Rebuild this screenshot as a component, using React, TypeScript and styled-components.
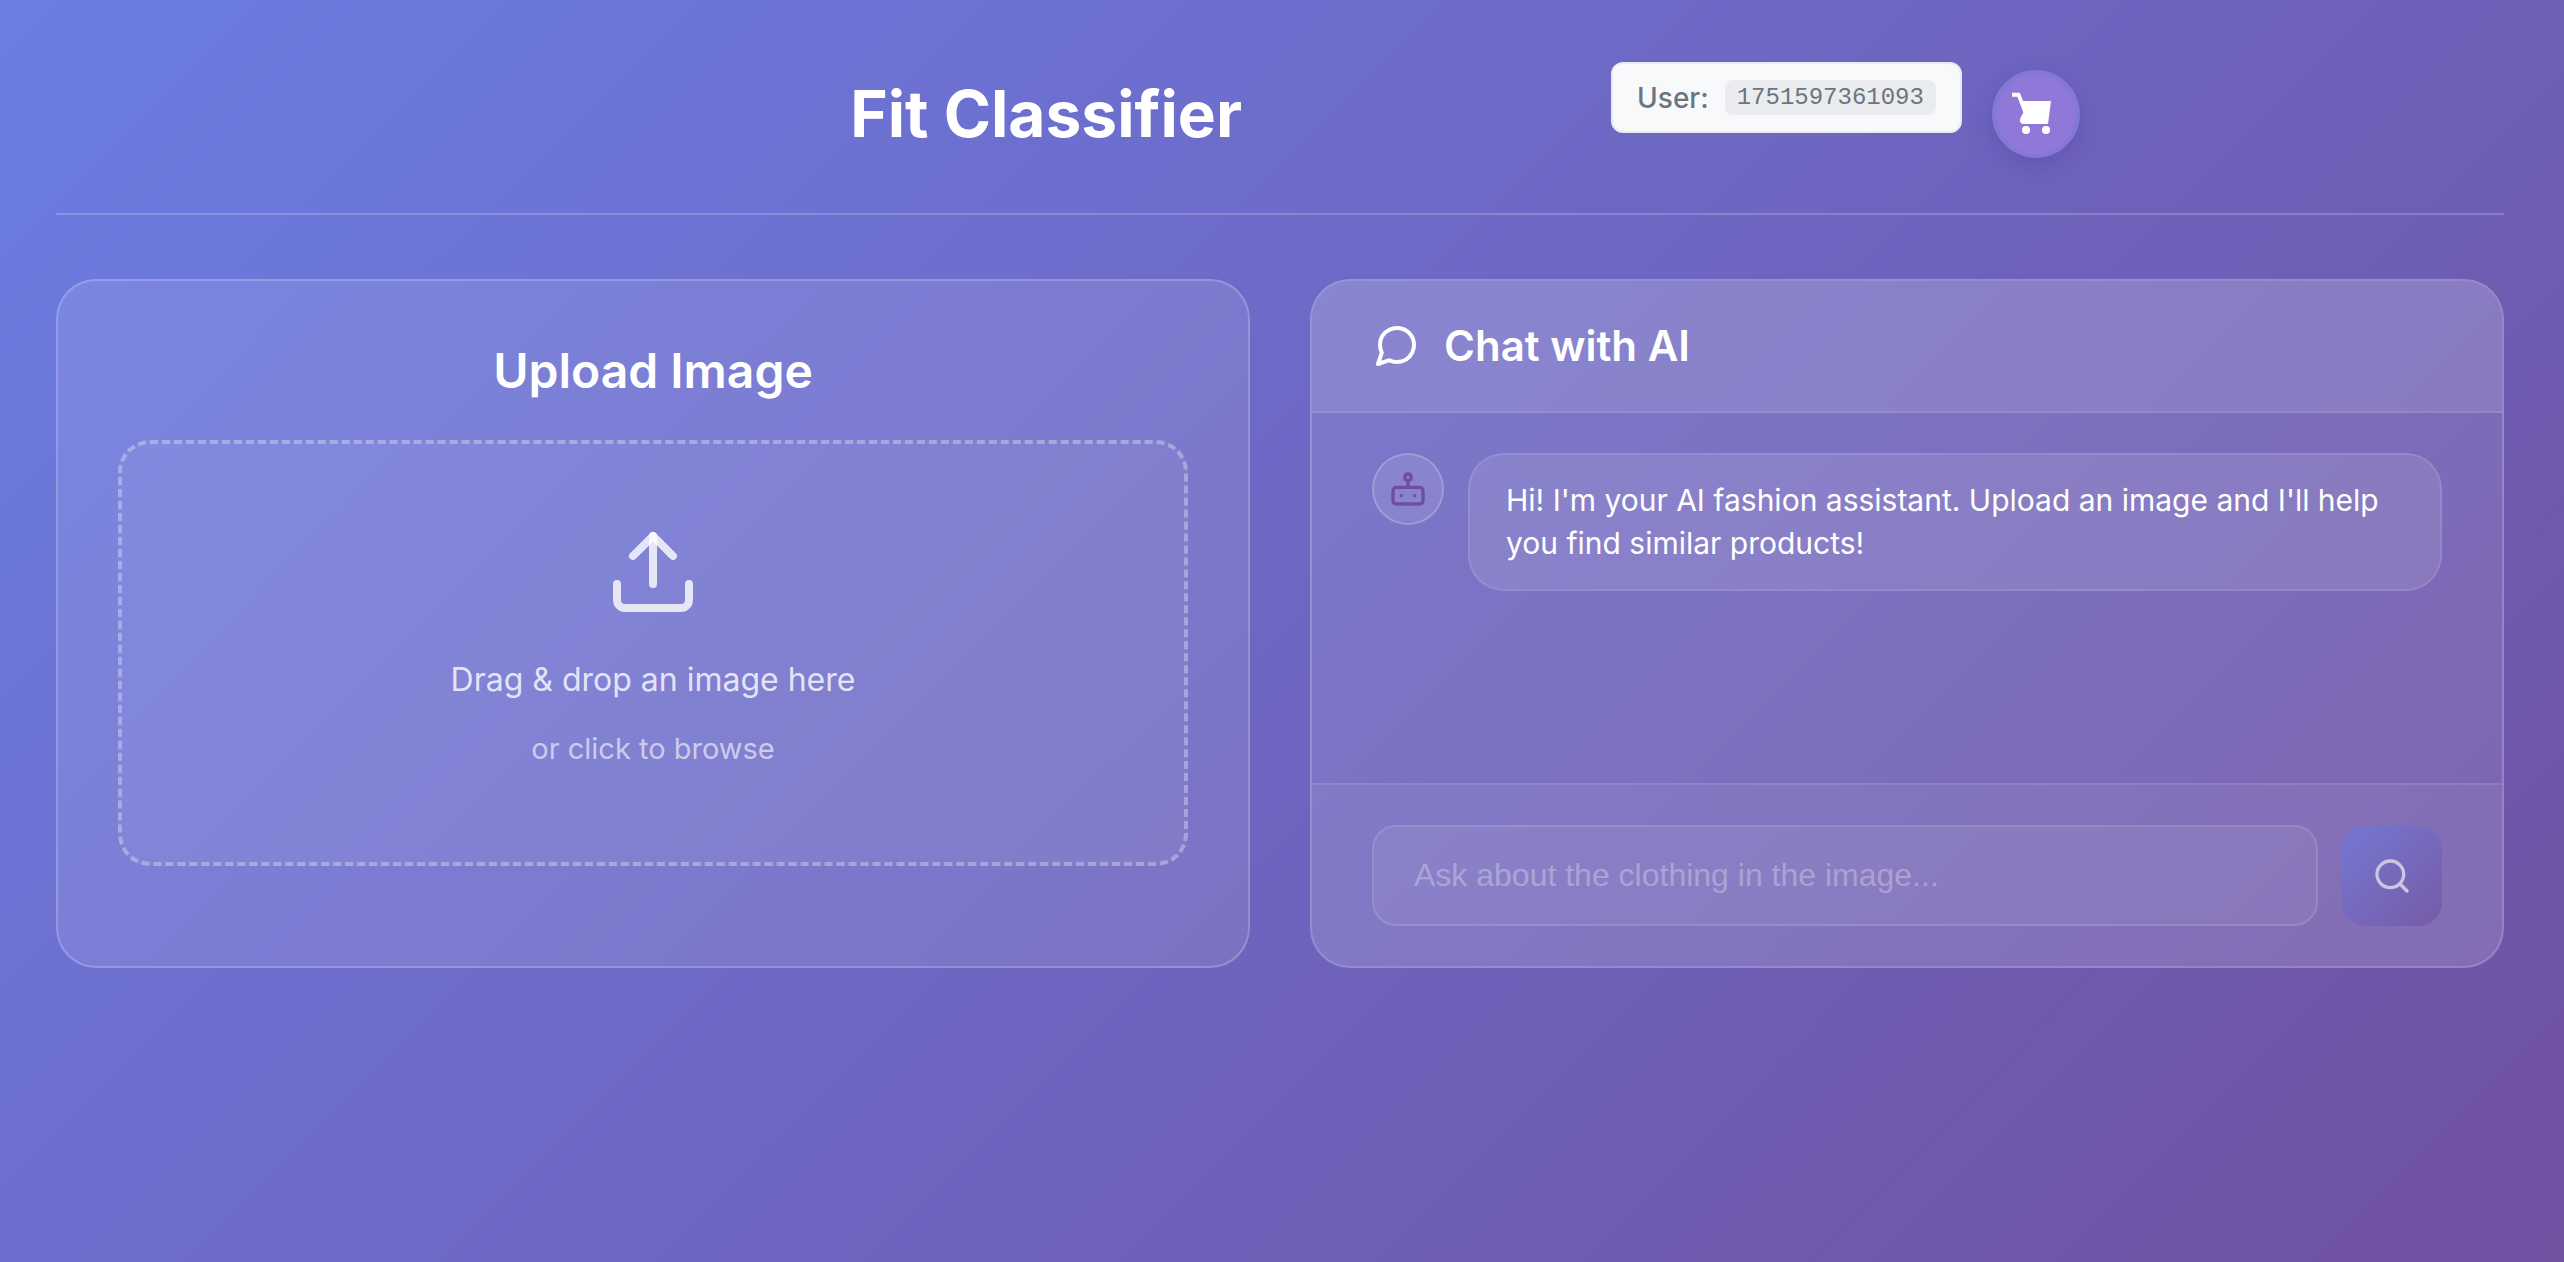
import React, { useState } from "react";
import styled, { createGlobalStyle } from "styled-components";

const sans = `Inter, "Liberation Sans", sans-serif`;
const brandGradient = "linear-gradient(135deg, #6b7de3 0%, #7050a1 100%)";

const GlobalStyle = createGlobalStyle`
  *, *::before, *::after { box-sizing: border-box; }
  body { margin: 0; font-family: ${sans}; }
  h1, h2, p { margin: 0; }
`;

const Page = styled.div`
  min-height: 100vh;
  padding: 40px 60px 60px 56px;
  background: ${brandGradient};
  color: #fff;
`;

const Header = styled.header`
  display: grid;
  grid-template-columns: 794fr auto 369fr auto 424fr;
  align-items: start;
  margin-bottom: 64px;
  padding: 22px 0 47px;
  border-bottom: 2px solid rgba(255, 255, 255, 0.2);
`;

const Title = styled.h1`
  grid-column: 2;
  font-size: 64px;
  line-height: 104px;
  font-weight: 700;
`;

const Account = styled.div`
  grid-column: 4;
  display: flex;
  align-items: flex-start;
  gap: 30px;
`;

const UserBadge = styled.div`
  display: flex;
  align-items: center;
  gap: 16px;
  height: 71px;
  padding: 0 24px;
  border: 2px solid #e9ecef;
  border-radius: 12px;
  background: #f8f9fa;
  color: #6c757d;
  font-size: 28px;
  font-weight: 500;
  font-variation-settings: "opsz" 14;
`;

const UserId = styled.code`
  padding: 0 12px;
  border-radius: 8px;
  background: #ebecef;
  color: #6c757d;
  font-family: "Liberation Mono", monospace;
  font-size: 24px;
  line-height: 35px;
  font-weight: 400;
`;

const CartButton = styled.button`
  display: grid;
  place-items: center;
  width: 88px;
  height: 88px;
  margin-top: 8px;
  padding: 0;
  border: 4px solid #8279d6;
  border-radius: 50%;
  background: #8f78d8;
  color: #fff;
  box-shadow: 0 8px 24px rgba(60, 30, 120, 0.2);
  cursor: pointer;
`;

const Columns = styled.main`
  display: grid;
  grid-template-columns: 1fr 1fr;
  gap: 60px;
`;

const Card = styled.section`
  display: flex;
  flex-direction: column;
  overflow: hidden;
  border: 2px solid rgba(255, 255, 255, 0.2);
  border-radius: 40px;
  background: rgba(255, 255, 255, 0.1);
`;

const UploadCard = styled(Card)`
  padding: 60px 60px 100px;
`;

const UploadTitle = styled.h2`
  margin-bottom: 40px;
  font-size: 48px;
  line-height: 59px;
  font-weight: 600;
  font-variation-settings: "opsz" 24;
  text-align: center;
`;

const DropZone = styled.label`
  display: flex;
  flex-direction: column;
  align-items: center;
  padding: 80px;
  border: 4px dashed rgba(255, 255, 255, 0.3);
  border-radius: 32px;
  background: rgba(255, 255, 255, 0.05);
  font-variation-settings: "opsz" 14;
  cursor: pointer;

  input { display: none; }
`;

const DropText = styled.p`
  margin-top: 32px;
  color: rgba(255, 255, 255, 0.8);
  font-size: 32px;
  line-height: 56px;
`;

const DropHint = styled.p`
  margin: 16px 0 8px;
  color: rgba(255, 255, 255, 0.6);
  font-size: 29px;
  line-height: 50px;
`;

const ChatHeader = styled.header`
  display: flex;
  align-items: center;
  gap: 24px;
  padding: 40px 60px;
  border-bottom: 2px solid rgba(255, 255, 255, 0.1);
  background: rgba(255, 255, 255, 0.1);
`;

const ChatTitle = styled.h2`
  font-size: 42px;
  line-height: 50px;
  font-weight: 600;
  font-variation-settings: "opsz" 24;
`;

const Messages = styled.div`
  flex: 1;
  padding: 40px 60px;
`;

const Message = styled.div`
  display: flex;
  align-items: flex-start;
  gap: 24px;
`;

const Avatar = styled.div`
  display: grid;
  flex: none;
  place-items: center;
  width: 72px;
  height: 72px;
  border: 2px solid rgba(255, 255, 255, 0.2);
  border-radius: 50%;
  background: rgba(255, 255, 255, 0.1);
  color: #704d9d;
`;

const Bubble = styled.p`
  flex: 1;
  padding: 24px 36px;
  border: 2px solid rgba(255, 255, 255, 0.1);
  border-radius: 36px;
  background: rgba(255, 255, 255, 0.1);
  font-size: 30px;
  line-height: 43px;
  font-variation-settings: "opsz" 14;
`;

const Composer = styled.form`
  display: flex;
  gap: 24px;
  padding: 40px 60px;
  border-top: 2px solid rgba(255, 255, 255, 0.1);
  background: rgba(255, 255, 255, 0.05);
`;

const Question = styled.input`
  flex: 1;
  min-width: 0;
  height: 101px;
  padding: 0 40px;
  border: 2px solid rgba(255, 255, 255, 0.2);
  border-radius: 24px;
  background: rgba(255, 255, 255, 0.1);
  color: #fff;
  font-family: "Liberation Sans", Arial, sans-serif;
  font-size: 32px;
  opacity: 0.6;

  &::placeholder { color: rgba(255, 255, 255, 0.5); opacity: 1; }
`;

const SearchButton = styled.button`
  display: grid;
  place-items: center;
  align-self: flex-end;
  width: 100px;
  height: 100px;
  padding: 0;
  border: 0;
  border-radius: 24px;
  background: ${brandGradient};
  color: #fff;
  opacity: 0.6;
`;

const LineIcon = ({ size, children }: { size: number; children: React.ReactNode }) => (
  <svg width={size} height={size} viewBox="0 0 24 24" fill="none" stroke="currentColor"
    strokeWidth="2" strokeLinecap="round" strokeLinejoin="round" aria-hidden="true">
    {children}
  </svg>
);

const UploadIcon = () => (
  <svg width="96" height="96" viewBox="0 0 24 24" fill="none" stroke="rgba(255,255,255,0.8)"
    strokeWidth="2" strokeLinecap="round" strokeLinejoin="round" aria-hidden="true">
    <path d="M21 15v4a2 2 0 0 1-2 2H5a2 2 0 0 1-2-2v-4" />
    <polyline points="17 8 12 3 7 8" />
    <line x1="12" y1="3" x2="12" y2="15" />
  </svg>
);

const CartIcon = () => (
  <svg width="48" height="48" viewBox="0 0 24 24" fill="currentColor" aria-hidden="true">
    <path d="M0 1.4h3.9l1.7 4.1h13.9L18 17H5.7c-1 0-1.7-.7-1.7-1.7 0-.7.2-1.3.5-1.9l1.2-2.1-3-7.9H0z" />
    <circle cx="7" cy="20" r="2" />
    <circle cx="17" cy="20" r="2" />
  </svg>
);

export default function App() {
  const [question, setQuestion] = useState("");

  return (
    <>
      <GlobalStyle />
      <Page>
        <Header>
          <Title>Fit Classifier</Title>
          <Account>
            <UserBadge>
              <span>User:</span>
              <UserId>1751597361093</UserId>
            </UserBadge>
            <CartButton type="button" aria-label="Cart"><CartIcon /></CartButton>
          </Account>
        </Header>
        <Columns>
          <UploadCard>
            <UploadTitle>Upload Image</UploadTitle>
            <DropZone>
              <input type="file" accept="image/*" />
              <UploadIcon />
              <DropText>Drag &amp; drop an image here</DropText>
              <DropHint>or click to browse</DropHint>
            </DropZone>
          </UploadCard>
          <Card>
            <ChatHeader>
              <LineIcon size={48}>
                <path d="M21 11.5a8.38 8.38 0 0 1-.9 3.8 8.5 8.5 0 0 1-7.6 4.7 8.38 8.38 0 0 1-3.8-.9L3 21l1.9-5.7a8.38 8.38 0 0 1-.9-3.8 8.5 8.5 0 0 1 4.7-7.6 8.38 8.38 0 0 1 3.8-.9h.5a8.48 8.48 0 0 1 8 8v.5z" />
              </LineIcon>
              <ChatTitle>Chat with AI</ChatTitle>
            </ChatHeader>
            <Messages>
              <Message>
                <Avatar>
                  <LineIcon size={40}>
                    <rect x="3" y="11" width="18" height="10" rx="2" />
                    <circle cx="12" cy="5" r="2" />
                    <path d="M12 7v4" />
                    <path d="M8 16h.01M16 16h.01" />
                  </LineIcon>
                </Avatar>
                <Bubble>
                  Hi! I'm your AI fashion assistant. Upload an image and I'll help you find similar products!
                </Bubble>
              </Message>
            </Messages>
            <Composer onSubmit={(e) => e.preventDefault()}>
              <Question
                aria-label="Question"
                placeholder="Ask about the clothing in the image..."
                value={question}
                onChange={(e) => setQuestion(e.target.value)}
                disabled
              />
              <SearchButton type="submit" aria-label="Search" disabled>
                <LineIcon size={40}>
                  <circle cx="11" cy="11" r="8" />
                  <path d="m21 21-4.35-4.35" />
                </LineIcon>
              </SearchButton>
            </Composer>
          </Card>
        </Columns>
      </Page>
    </>
  );
}
